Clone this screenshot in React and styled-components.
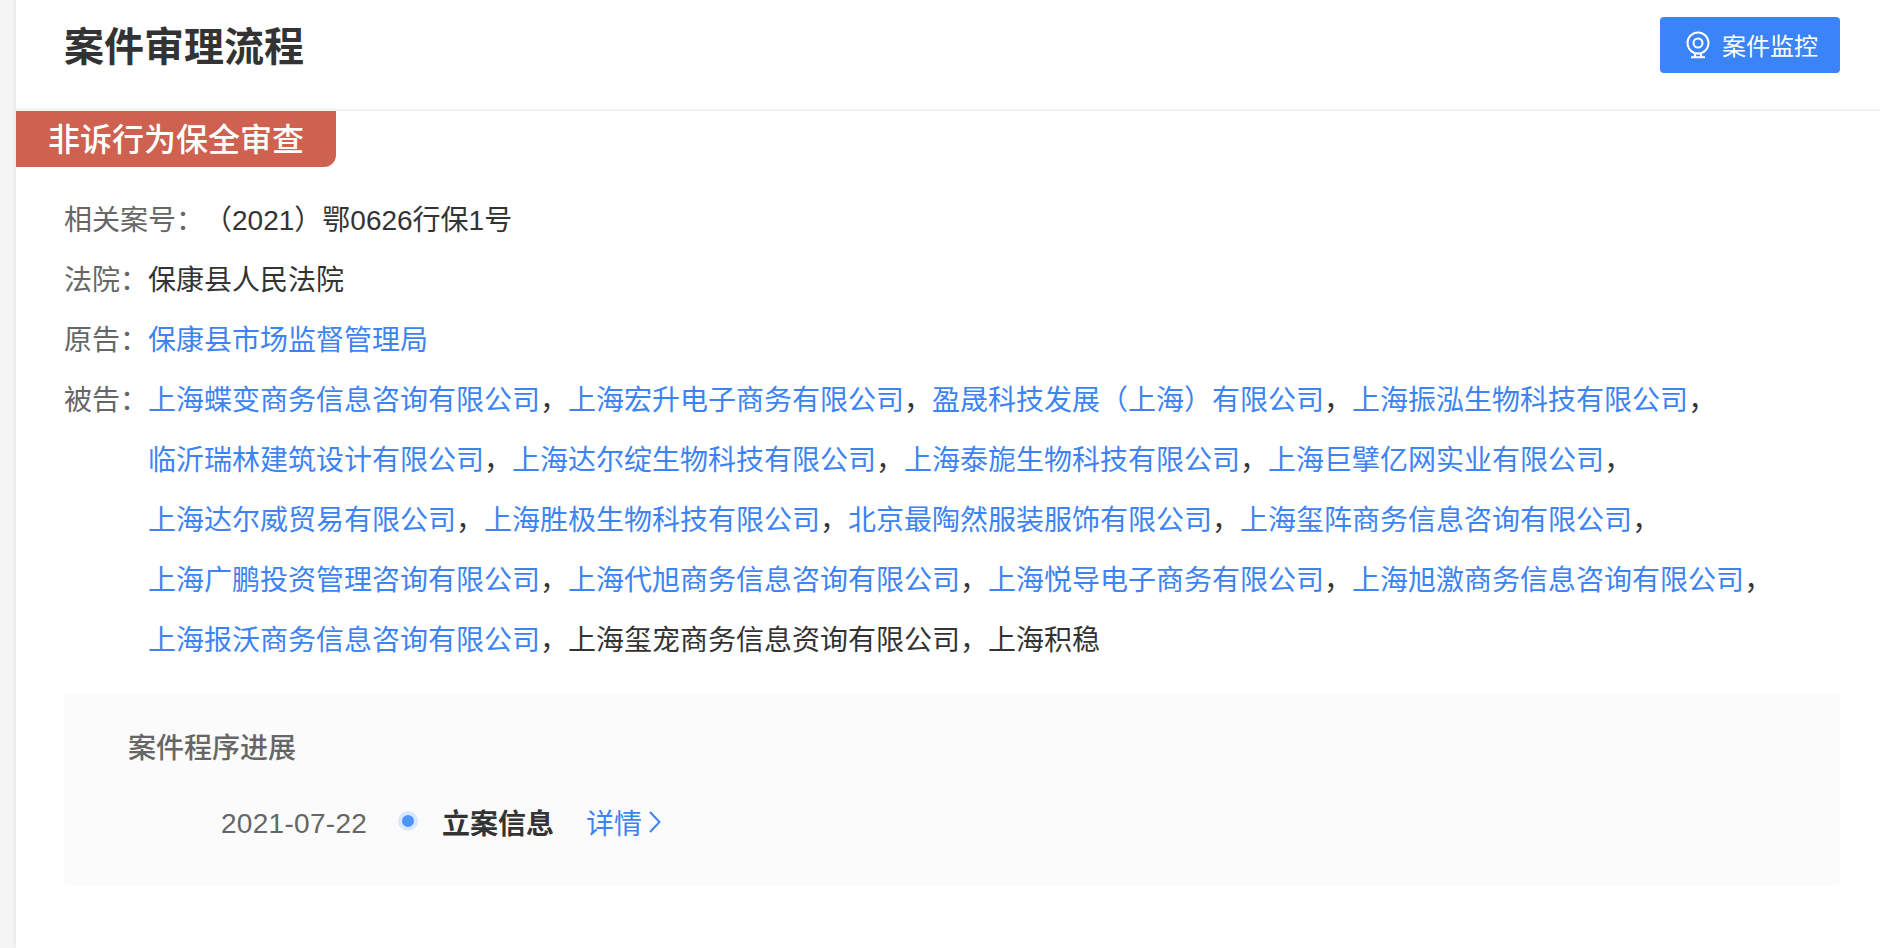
import React from "react";
import styled, { createGlobalStyle } from "styled-components";

const infoRows = [
  { label: "相关案号：", parties: [{ name: "（2021）鄂0626行保1号" }] },
  { label: "法院：", parties: [{ name: "保康县人民法院" }] },
  { label: "原告：", parties: [{ name: "保康县市场监督管理局", link: true }] },
  {
    label: "被告：",
    parties: [
      { name: "上海蝶变商务信息咨询有限公司", link: true },
      { name: "上海宏升电子商务有限公司", link: true },
      { name: "盈晟科技发展（上海）有限公司", link: true },
      { name: "上海振泓生物科技有限公司", link: true },
      { name: "临沂瑞林建筑设计有限公司", link: true },
      { name: "上海达尔绽生物科技有限公司", link: true },
      { name: "上海泰旎生物科技有限公司", link: true },
      { name: "上海巨擘亿网实业有限公司", link: true },
      { name: "上海达尔威贸易有限公司", link: true },
      { name: "上海胜极生物科技有限公司", link: true },
      { name: "北京最陶然服装服饰有限公司", link: true },
      { name: "上海玺阵商务信息咨询有限公司", link: true },
      { name: "上海广鹏投资管理咨询有限公司", link: true },
      { name: "上海代旭商务信息咨询有限公司", link: true },
      { name: "上海悦导电子商务有限公司", link: true },
      { name: "上海旭激商务信息咨询有限公司", link: true },
      { name: "上海报沃商务信息咨询有限公司", link: true },
      { name: "上海玺宠商务信息资询有限公司" },
      { name: "上海积稳" },
    ],
  },
];

const MonitorIcon = () => (
  <svg width="24" height="28" viewBox="0 0 24 28" fill="none" stroke="#fff" strokeWidth="2">
    <circle cx="12" cy="12" r="10.5" />
    <circle cx="12" cy="12" r="4.5" />
    <path d="M9.5 22l-1 4M14.5 22l1 4M5 26.3h14" />
  </svg>
);

const ArrowIcon = () => (
  <svg width="12" height="22" viewBox="0 0 12 22" fill="none" stroke="#3d83f2" strokeWidth="2">
    <path d="M1 1l9.5 10L1 21" />
  </svg>
);

const App = () => {
  return (
    <>
      <GlobalStyle />
      <Page>
        <Panel>
          <Header>
            <Title>案件审理流程</Title>
            <MonitorButton>
              <MonitorIcon />
              <ButtonText>案件监控</ButtonText>
            </MonitorButton>
          </Header>
          <Tag>非诉行为保全审查</Tag>
          <Info>
            {infoRows.map(({ label, parties }) => (
              <InfoRow key={label}>
                <Label>{label}</Label>
                <Value>
                  {parties.map((party, index) => (
                    <Party key={party.name}>
                      {party.link ? <PartyLink>{party.name}</PartyLink> : party.name}
                      {index < parties.length - 1 && "，"}
                    </Party>
                  ))}
                </Value>
              </InfoRow>
            ))}
          </Info>
          <Progress>
            <ProgressTitle>案件程序进展</ProgressTitle>
            <Step>
              <StepDate>2021-07-22</StepDate>
              <Dot />
              <StepName>立案信息</StepName>
              <Detail>
                详情
                <ArrowIcon />
              </Detail>
            </Step>
          </Progress>
        </Panel>
      </Page>
    </>
  );
};

export default App;

const GlobalStyle = createGlobalStyle`
  * {
    box-sizing: border-box;
  }

  body {
    margin: 0;
    background: #f5f5f5;
    color: #333;
    font-family: "Liberation Sans", "Noto Sans CJK SC", sans-serif;
    font-size: 28px;
  }
`;

const Page = styled.div`
  height: 948px;
  padding-left: 16px;
  overflow: hidden;
`;

const Panel = styled.section`
  height: 100%;
  background: #fff;
  box-shadow: 0 0 4px rgba(0, 0, 0, 0.1);
`;

const Header = styled.header`
  display: flex;
  justify-content: space-between;
  align-items: flex-start;
  height: 111px;
  padding: 17px 40px 0 48px;
  border-bottom: 2px solid #f2f2f2;
`;

const Title = styled.h1`
  margin: 0;
  font-size: 40px;
  font-weight: 700;
  line-height: 60px;
`;

const MonitorButton = styled.button`
  display: flex;
  align-items: center;
  gap: 12px;
  width: 180px;
  height: 56px;
  padding: 0 0 0 26px;
  border: 0;
  border-radius: 4px;
  background: #3a84f7;
  color: #fff;
  font-family: inherit;
  font-size: 24px;
`;

const ButtonText = styled.span`
  padding-bottom: 2px;
`;

const Tag = styled.div`
  width: 320px;
  height: 56px;
  padding-left: 32px;
  border-radius: 0 0 12px 0;
  background: #ce614f;
  color: #fff;
  font-size: 32px;
  font-weight: 500;
  line-height: 58px;
`;

const Info = styled.div`
  padding: 24px 48px 0;
  line-height: 60px;
`;

const InfoRow = styled.div`
  display: flex;
`;

const Label = styled.span`
  flex: none;
  color: #666;
`;

const Value = styled.div`
  flex: 1;
`;

const Party = styled.span`
  display: inline-block;
`;

const PartyLink = styled.a`
  color: #3d83f2;
`;

const Progress = styled.div`
  height: 192px;
  margin: 22px 40px 0 48px;
  padding: 36px 64px 0;
  border-radius: 4px;
  background: #fbfbfb;
`;

const ProgressTitle = styled.h2`
  margin: 0;
  color: #666;
  font-size: 28px;
  font-weight: 500;
  line-height: 40px;
`;

const Step = styled.div`
  display: flex;
  align-items: center;
  height: 40px;
  margin-top: 33px;
  padding-left: 93px;
`;

const StepDate = styled.span`
  width: 177px;
  padding-top: 3px;
  color: #666;
  letter-spacing: 0.3px;
`;

const Dot = styled.i`
  width: 20px;
  height: 20px;
  margin-bottom: 2px;
  border: 4px solid #d9e8fe;
  border-radius: 50%;
  background: #4a94fa;
`;

const StepName = styled.strong`
  margin-left: 24px;
  font-weight: 700;
`;

const Detail = styled.a`
  display: flex;
  align-items: center;
  gap: 7px;
  margin-left: 32px;
  color: #3d83f2;
`;
